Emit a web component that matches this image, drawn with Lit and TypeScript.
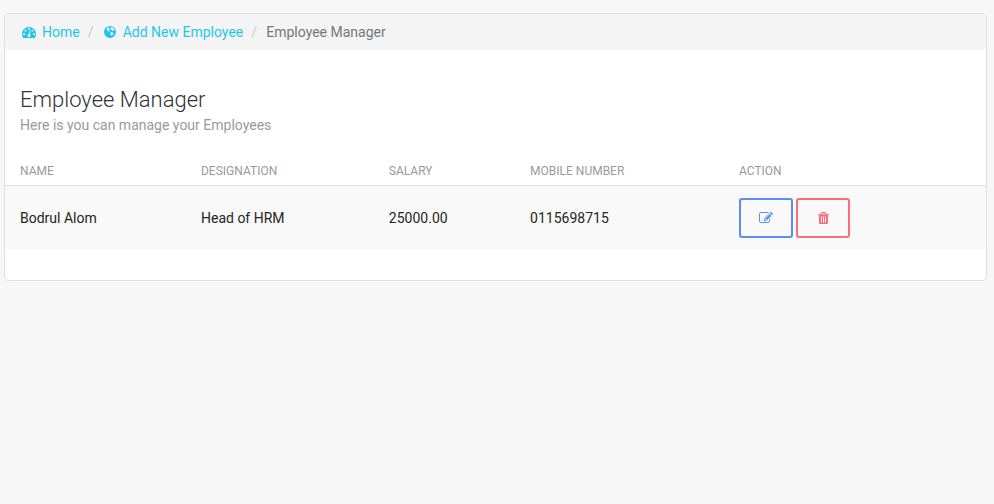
import { LitElement, html, css, svg } from "lit";
import { customElement } from "lit/decorators.js";

interface Employee {
  name: string;
  designation: string;
  salary: string;
  mobile: string;
}

const employees: Employee[] = [
  { name: "Bodrul Alom", designation: "Head of HRM", salary: "25000.00", mobile: "0115698715" },
];

const icon = (shape: unknown, viewBox = "0 0 1792 1792") =>
  html`<svg class="icon" viewBox=${viewBox} aria-hidden="true">${shape}</svg>`;

const dashboardIcon = svg`<path d="M384 1152q0-53-37.5-90.5t-90.5-37.5-90.5 37.5-37.5 90.5 37.5 90.5 90.5 37.5 90.5-37.5 37.5-90.5zm192-448q0-53-37.5-90.5t-90.5-37.5-90.5 37.5-37.5 90.5 37.5 90.5 90.5 37.5 90.5-37.5 37.5-90.5zm428 481l101-382q6-26-7.5-48.5t-38.5-29.5-48 6.5-30 39.5l-101 382q-60 5-107 43.5t-63 98.5q-20 77 20 146t117 89 146-20 89-117q16-60-6-117t-72-91zm660-33q0-53-37.5-90.5t-90.5-37.5-90.5 37.5-37.5 90.5 37.5 90.5 90.5 37.5 90.5-37.5 37.5-90.5zm-640-640q0-53-37.5-90.5t-90.5-37.5-90.5 37.5-37.5 90.5 37.5 90.5 90.5 37.5 90.5-37.5 37.5-90.5zm448 192q0-53-37.5-90.5t-90.5-37.5-90.5 37.5-37.5 90.5 37.5 90.5 90.5 37.5 90.5-37.5 37.5-90.5zm320 448q0 261-141 483-19 29-54 29h-1402q-35 0-54-29-141-221-141-483 0-182 71-348t191-286 286-191 348-71 348 71 286 191 191 286 71 348z"/>`;

const globeIcon = svg`<path fill-rule="evenodd" d="M896 128a768 768 0 1 1 0 1536a768 768 0 1 1 0-1536zM660 300L520 400L450 540L540 680L650 760L770 880L850 920L820 800L730 740L740 650L850 580L870 480L780 420L790 310zM1040 270L960 330L1030 410L1010 500L920 590L950 670L1080 640L1200 660L1280 760L1400 720L1470 640L1400 480L1280 350L1160 290zM960 950L1060 890L1200 960L1340 1050L1290 1190L1170 1290L1040 1380L990 1240L1010 1120L940 1040z"/>`;

const editIcon = svg`<path d="M888 1184l116-116-152-152-116 116v56h96v96h56zm440-720q-16-16-33 1l-350 350q-17 17-1 33t33-1l350-350q17-17 1-33zm80 594v190q0 119-84.5 203.5t-203.5 84.5h-832q-119 0-203.5-84.5t-84.5-203.5v-832q0-119 84.5-203.5t203.5-84.5h832q63 0 117 25 15 7 18 23 3 17-9 29l-49 49q-14 14-32 8-23-6-45-6h-832q-66 0-113 47t-47 113v832q0 66 47 113t113 47h832q66 0 113-47t47-113v-126q0-13 9-22l64-64q15-15 35-7t20 29zm-96-738l288 288-672 672h-288v-288zm444 132l-92 92-288-288 92-92q28-28 68-28t68 28l152 152q28 28 28 68t-28 68z"/>`;

const trashIcon = svg`<path fill-rule="evenodd" d="M2 3.2h2.6l.5-1.4q.3-.8 1.1-.8h2.6q.8 0 1.1.8l.5 1.4h2.6v1h-1v7.6q0 1.2-1 1.2h-7q-1 0-1-1.2v-7.6h-1zM5.7 3.2h3.6l-.4-1h-2.8zM5 5.5v6h1v-6zM7 5.5v6h1v-6zM9 5.5v6h1v-6z"/>`;

@customElement("app-root")
export class AppRoot extends LitElement {
  static styles = css`
    :host {
      display: block;
      box-sizing: border-box;
      min-height: 100vh;
      padding: 13px 7px 13px 4px;
      background: #f7f7f7;
      color: #252422;
      font: 14px/20px Roboto, sans-serif;
    }
    .card {
      border: 1px solid #e0e0e0;
      border-radius: 5px;
      background: #fff;
      padding-bottom: 30px;
    }
    .breadcrumb {
      display: flex;
      align-items: center;
      margin: 0;
      padding: 8px 17px;
      list-style: none;
      border-radius: 4px;
      background: #f4f4f4;
      color: #777;
    }
    .crumb {
      display: flex;
      align-items: center;
    }
    .crumb + .crumb::before {
      content: "/";
      width: 6px;
      padding: 0 9px 0 8px;
      color: #ccc;
    }
    .crumb-link {
      display: flex;
      align-items: center;
      gap: 6px;
      color: #1dc7ea;
      text-decoration: none;
    }
    .icon {
      display: block;
      width: 14px;
      height: 14px;
      fill: currentColor;
    }
    .header {
      padding: 36px 15px 0;
    }
    .title {
      margin: 0;
      font-size: 22px;
      line-height: 28px;
      font-weight: 300;
      color: #333;
    }
    .subtitle {
      margin: 0;
      line-height: 22px;
      color: #9a9a9a;
    }
    .employees {
      width: 100%;
      margin-top: 20px;
      table-layout: fixed;
      border-collapse: collapse;
    }
    .heading {
      box-sizing: border-box;
      padding: 5px 15px 4px;
      border-bottom: 1px solid #ddd;
      font-size: 12px;
      font-weight: 400;
      text-align: left;
      text-transform: uppercase;
      color: #9a9a9a;
    }
    .col-name { width: 18.45%; }
    .col-designation { width: 19.15%; }
    .col-salary { width: 14.4%; }
    .col-mobile { width: 21.3%; }
    .row {
      background: #f9f9f9;
    }
    .cell {
      padding: 12px 15px;
    }
    .actions {
      display: flex;
      gap: 3px;
    }
    .button {
      display: flex;
      align-items: center;
      justify-content: center;
      width: 54px;
      height: 40px;
      padding: 0;
      border: 2px solid currentColor;
      border-radius: 3px;
      background: transparent;
    }
    .edit { color: #588ff5; }
    .delete { color: #fb6e79; }
  `;

  render() {
    return html`
      <main class="card">
        <nav aria-label="Breadcrumb">
          <ol class="breadcrumb">
            <li class="crumb"><a class="crumb-link" href="#">${icon(dashboardIcon)}Home</a></li>
            <li class="crumb"><a class="crumb-link" href="#add">${icon(globeIcon)}Add New Employee</a></li>
            <li class="crumb" aria-current="page">Employee Manager</li>
          </ol>
        </nav>
        <header class="header">
          <h1 class="title">Employee Manager</h1>
          <p class="subtitle">Here is you can manage your Employees</p>
        </header>
        <table class="employees">
          <thead>
            <tr>
              <th class="heading col-name" scope="col">Name</th>
              <th class="heading col-designation" scope="col">Designation</th>
              <th class="heading col-salary" scope="col">Salary</th>
              <th class="heading col-mobile" scope="col">Mobile Number</th>
              <th class="heading" scope="col">Action</th>
            </tr>
          </thead>
          <tbody>
            ${employees.map(
              (e) => html`
                <tr class="row">
                  <td class="cell">${e.name}</td>
                  <td class="cell">${e.designation}</td>
                  <td class="cell">${e.salary}</td>
                  <td class="cell">${e.mobile}</td>
                  <td class="cell">
                    <div class="actions">
                      <button class="button edit" type="button" aria-label="Edit">${icon(editIcon)}</button>
                      <button class="button delete" type="button" aria-label="Delete">${icon(trashIcon, "0 0 14 14")}</button>
                    </div>
                  </td>
                </tr>
              `
            )}
          </tbody>
        </table>
      </main>
    `;
  }
}
